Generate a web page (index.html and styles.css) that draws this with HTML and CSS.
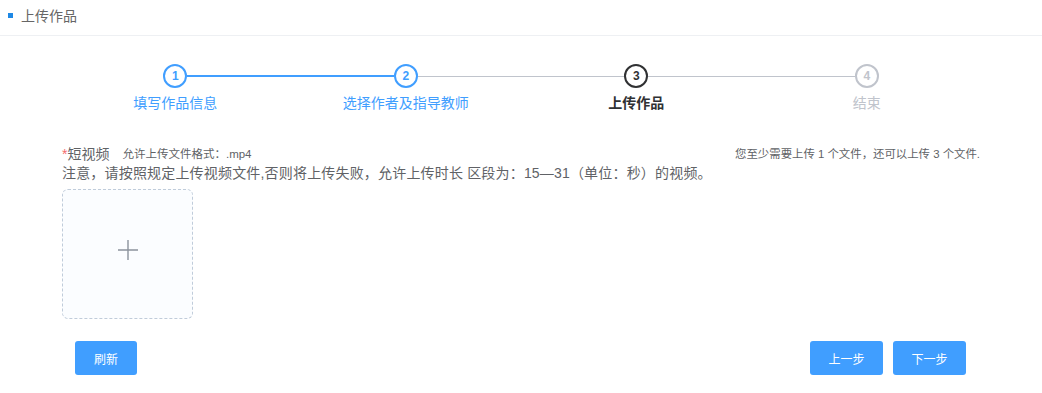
FILE: index.html
```html
<!DOCTYPE html>
<html lang="zh-CN">
<head>
<meta charset="utf-8">
<title>上传作品</title>
<link rel="stylesheet" href="styles.css">
</head>
<body>
<div class="header">
  <span class="mark"></span>
  <span class="header-title">上传作品</span>
</div>

<div class="steps">
  <div class="step done">
    <div class="step-head">
      <span class="half none"></span>
      <span class="icon">1</span>
      <span class="half blue"></span>
    </div>
    <div class="step-title">填写作品信息</div>
  </div>
  <div class="step done">
    <div class="step-head">
      <span class="half blue"></span>
      <span class="icon">2</span>
      <span class="half gray"></span>
    </div>
    <div class="step-title">选择作者及指导教师</div>
  </div>
  <div class="step current">
    <div class="step-head">
      <span class="half gray"></span>
      <span class="icon">3</span>
      <span class="half gray"></span>
    </div>
    <div class="step-title">上传作品</div>
  </div>
  <div class="step wait">
    <div class="step-head">
      <span class="half gray"></span>
      <span class="icon">4</span>
      <span class="half none"></span>
    </div>
    <div class="step-title">结束</div>
  </div>
</div>

<div class="form">
  <div class="form-row">
    <div class="label-group">
      <span class="label"><span class="req">*</span>短视频</span>
      <span class="hint">允许上传文件格式：.mp4</span>
    </div>
    <div class="count">您至少需要上传 1 个文件，还可以上传 3 个文件.</div>
  </div>
  <div class="notice">注意，请按照规定上传视频文件,否则将上传失败，允许上传时长 区段为：15—31（单位：秒）的视频。</div>
  <div class="upload">
    <svg class="plus" width="22" height="22" viewBox="0 0 22 22"><path d="M11 1V21M1 11H21" stroke="#8c939d" stroke-width="1.4" fill="none"/></svg>
  </div>
</div>

<div class="actions">
  <button class="btn btn-refresh">刷新</button>
  <div class="nav">
    <button class="btn btn-nav">上一步</button>
    <button class="btn btn-nav">下一步</button>
  </div>
</div>
</body>
</html>
```

FILE: styles.css
```css
* { box-sizing: border-box; }
body {
  margin: 0;
  font-family: "Liberation Sans", "Noto Sans CJK SC", sans-serif;
  background: #fff;
  color: #606266;
}
.header {
  height: 36px;
  display: flex;
  align-items: center;
  padding-left: 8px;
  border-bottom: 1px solid #eef0f3;
}
.mark {
  width: 5px;
  height: 5px;
  background: #1e88e5;
  margin-right: 8px;
  margin-top: -5px;
}
.header-title {
  font-size: 14px;
  color: #666;
  margin-top: -6px;
}
.steps {
  display: flex;
  padding: 0 60px;
  margin-top: 28px;
}
.step {
  flex: 1;
  display: flex;
  flex-direction: column;
  align-items: stretch;
}
.step-head {
  display: flex;
  align-items: center;
  height: 24px;
}
.half { flex: 1; height: 2px; }
.half.none { background: transparent; }
.half.blue { background: #409eff; }
.half.gray { background: #c0c4cc; height: 1px; }
.icon {
  width: 24px;
  height: 24px;
  border-radius: 50%;
  border: 2px solid;
  display: flex;
  align-items: center;
  justify-content: center;
  font-size: 12px;
  font-weight: bold;
  flex: none;
}
.step-title {
  text-align: center;
  font-size: 14px;
  line-height: 30px;
}
.done .icon { color: #409eff; border-color: #409eff; }
.done .step-title { color: #409eff; }
.current .icon { color: #303133; border-color: #303133; }
.current .step-title { color: #303133; font-weight: bold; }
.wait .icon { color: #c0c4cc; border-color: #c0c4cc; }
.wait .step-title { color: #c0c4cc; }

.form {
  padding: 0 62px;
  margin-top: 25px;
}
.form-row {
  display: flex;
  justify-content: space-between;
  align-items: center;
  height: 20px;
}
.label-group { display: flex; align-items: center; gap: 13px; }
.label { font-size: 14px; color: #606266; }
.req { color: #f56c6c; }
.hint { font-size: 11.5px; color: #606266; }
.count { font-size: 11.4px; color: #606266; }
.notice {
  font-size: 14px;
  line-height: 20px;
  color: #606266;
  letter-spacing: 0.18px;
}
.upload {
  margin-top: 6px;
  width: 131px;
  height: 130px;
  border: 1px dashed #c0ccda;
  border-radius: 6px;
  background: #fbfdff;
  display: flex;
  align-items: center;
  justify-content: center;
}
.plus { margin-bottom: 8px; }
.actions {
  display: flex;
  justify-content: space-between;
  padding: 0 76px 0 75px;
  margin-top: 22px;
}
.nav { display: flex; gap: 10px; }
.btn {
  height: 34px;
  border: none;
  border-radius: 3px;
  background: #409eff;
  color: #fff;
  font-size: 12px;
  font-family: inherit;
  padding: 0;
}
.btn-refresh { width: 62px; }
.btn-nav { width: 73px; }
```
